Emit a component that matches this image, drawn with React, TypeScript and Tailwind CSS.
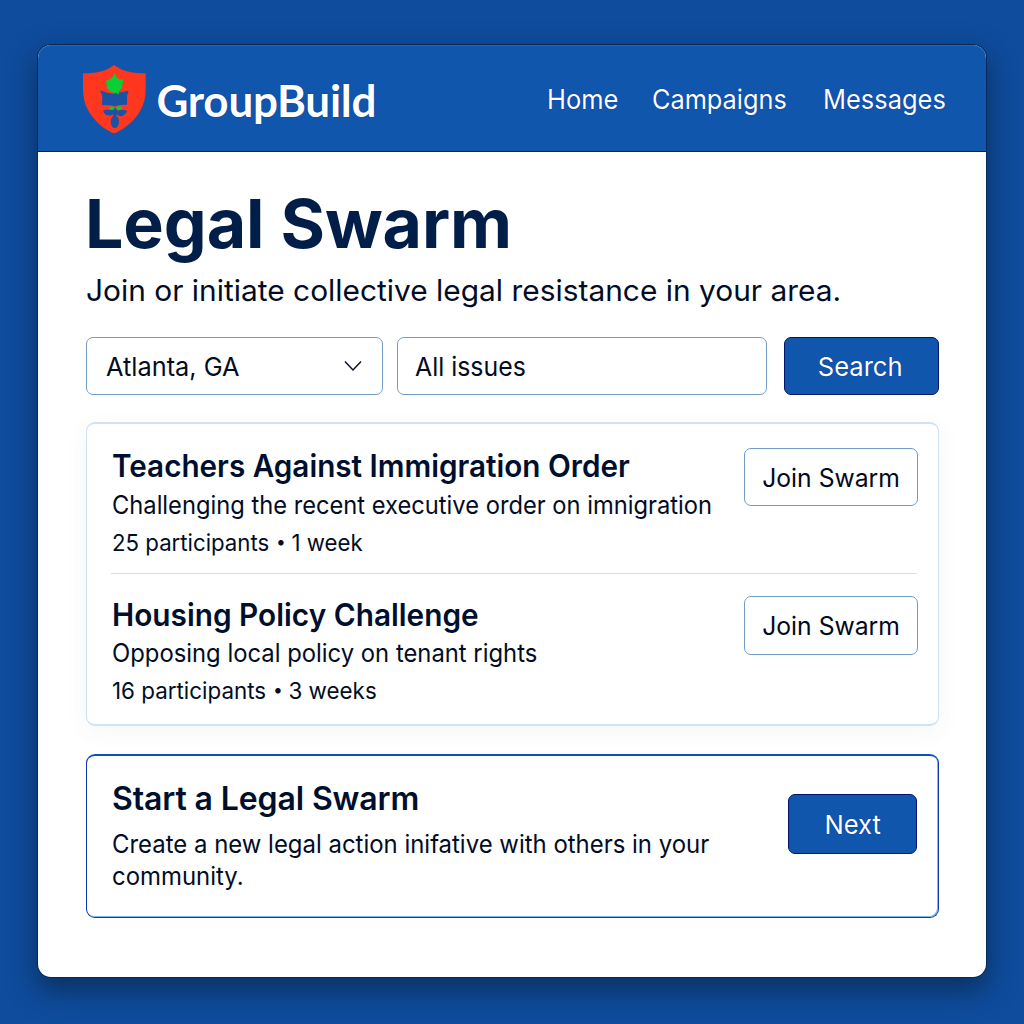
import React from 'react';

function ShieldLogo() {
  return (
    <svg className="mt-px h-[68px] w-[63px] shrink-0" viewBox="39 30 189 204" aria-hidden="true">
      <path
        fill="#ff371f"
        d="M132 30C122 38 111 44 100 47C82 53 62 54 39 55V103C39 126 44 149 56 169C73 197 98 220 126 233Q133 236 141 232C170 217 193 197 210 169C222 149 227 127 227 103V55C204 54 184 53 166 47C154 44 143 38 132 30Z"
      />
      <path
        fill="#1c52a3"
        d="M90 106L112 113L133 116L153 112L176 107L171 124V149L150 150L134 154L118 151L96 150L97 124Z"
      />
      <path
        fill="#1c52a3"
        d="M99 167Q111 161 123 166L130 159H138L143 167Q157 161 172 168Q167 180 153 184Q143 184 141 178L139 183Q147 188 147 200Q147 216 134 220Q122 216 122 200Q122 188 130 183L128 178Q123 184 113 181Q104 179 99 167Z"
      />
      <path fill="#12c53a" d="M116 161Q119 152 130 154L134 163L125 165ZM138 163L142 153Q154 152 157 161L148 166Z" />
      <path
        fill="#07cf35"
        d="M134 53C137 62 141 70 150 74Q158 71 160 77C158 81 159 86 156 90C159 97 153 104 149 106Q145 109 146 113L147 120L141 115L134 113C127 114 118 110 116 105Q109 101 110 93C112 88 107 84 108 79Q110 75 116 75C126 69 131 61 134 53Z"
      />
    </svg>
  );
}

type Swarm = {
  title: string;
  description: string;
  participants: string;
  duration: string;
  titleScale: string;
  descriptionScale: string;
  metaScale: string;
};

const swarms: Swarm[] = [
  {
    title: 'Teachers Against Immigration Order',
    description: 'Challenging the recent executive order on imnigration',
    participants: '25 participants',
    duration: '1 week',
    titleScale: 'scale-x-[0.957]',
    descriptionScale: 'scale-x-[0.948]',
    metaScale: 'scale-x-[0.966]',
  },
  {
    title: 'Housing Policy Challenge',
    description: 'Opposing local policy on tenant rights',
    participants: '16 participants',
    duration: '3 weeks',
    titleScale: 'scale-x-[0.961]',
    descriptionScale: 'scale-x-[0.953]',
    metaScale: 'scale-x-[0.973]',
  },
];

function SwarmText({ swarm, second }: { swarm: Swarm; second?: boolean }) {
  return (
    <div className="w-[620px] whitespace-nowrap">
      <h2 className={`origin-left text-[31px] leading-10 font-semibold text-[#000f2e] ${swarm.titleScale}`}>
        {swarm.title}
      </h2>
      <p className={`origin-left text-[25px] leading-9 ${second ? '' : 'mt-px'} ${swarm.descriptionScale}`}>
        {swarm.description}
      </p>
      <p className={`mt-0.5 flex origin-left items-center text-[23px] leading-9 ${swarm.metaScale}`}>
        {swarm.participants}
        <span className="mx-[7px] -mt-0.5 w-[9px] text-center text-[18px] leading-9">•</span>
        {swarm.duration}
      </p>
    </div>
  );
}

function JoinButton() {
  return (
    <button className="flex h-[58.5px] w-[174px] shrink-0 justify-center rounded-[7px] border border-[#719dc4] bg-white pt-[11px] text-[25.5px] leading-9 whitespace-nowrap text-[#000a20]">
      <span className="scale-x-[0.969]">Join Swarm</span>
    </button>
  );
}

export default function App() {
  return (
    <div className="h-[1024px] w-[1024px] overflow-hidden bg-[#0f4c9d] pt-[45px] pl-[38px] font-['Inter',sans-serif] text-[#020d25]">
      <div className="h-[932px] w-[948px] overflow-hidden rounded-[13px] bg-white shadow-[0_0_0_1px_#04285c,0_12px_28px_2px_rgba(10,42,78,0.75)]">
        <header className="flex h-[107px] items-center rounded-t-[13px] border-b border-b-[#001478] bg-[#1056ad] pl-[45px] text-white shadow-[inset_0_1px_0_#2368b8]">
          <ShieldLogo />
          <span className="mt-[3px] ml-[10.5px] w-[220px] font-['Lato',sans-serif] text-[44px] leading-[56px] font-bold tracking-[-0.26px] [text-shadow:0_0_1px_#001a90]">
            GroupBuild
          </span>
          <nav className="mt-px ml-[170px] flex text-[26.5px] leading-9 whitespace-nowrap [text-shadow:0_0_1px_#001a90]">
            <a className="w-[105px] origin-left scale-x-[0.961]">Home</a>
            <a className="w-[171px] origin-left scale-x-[0.955]">Campaigns</a>
            <a className="origin-left scale-x-[0.96]">Messages</a>
          </nav>
        </header>

        <main className="pt-[35px] pl-12">
          <h1 className="-ml-px text-[68px] leading-[72px] font-bold tracking-[-0.077px] whitespace-nowrap text-[#001e48]">
            Legal Swarm
          </h1>
          <p className="mt-[13px] w-[760px] origin-left scale-x-[1.013] text-[29.5px] leading-9 whitespace-nowrap">
            Join or initiate collective legal resistance in your area.
          </p>

          <form className="mt-[29px] flex h-[58px] w-[853px] text-[26px] leading-9 whitespace-nowrap">
            <div className="flex w-[297px] items-center justify-between rounded-[7px] border border-[#719dc4] pr-5 pl-[19px]">
              <span className="mt-px origin-left scale-x-[0.975]">Atlanta, GA</span>
              <svg className="h-3 w-[18px]" viewBox="0 0 18 12" fill="none" stroke="#020d25" strokeWidth="1.4">
                <path d="M1 1.5L9 10L17 1.5" />
              </svg>
            </div>
            <div className="ml-[14px] flex w-[370px] items-center rounded-[7px] border border-[#719dc4] pl-[17px]">
              <span className="mt-px origin-left scale-x-[0.956]">All issues</span>
            </div>
            <button
              type="button"
              className="ml-[17px] w-[155px] rounded-[7px] border border-[#00156e] bg-[#1056ad] pt-px pr-[3px] text-white [text-shadow:0_0_1px_#001a90]"
            >
              <span className="inline-block scale-x-[0.983]">Search</span>
            </button>
          </form>

          <section className="mt-[27px] h-[304px] w-[853px] rounded-[9px] border border-y-2 border-[#d2e2f3] bg-white pr-5 pl-[25px] shadow-[0_6px_24px_rgba(30,70,120,0.05)]">
            <div className="flex h-[149px] items-start justify-between pt-[22px]">
              <SwarmText swarm={swarms[0]} />
              <div className="mt-[1.5px]">
                <JoinButton />
              </div>
            </div>
            <div className="mr-px -ml-px h-px bg-[#cfdff0]" />
            <div className="flex items-start justify-between pt-[21px]">
              <SwarmText swarm={swarms[1]} second />
              <div className="mt-px">
                <JoinButton />
              </div>
            </div>
          </section>

          <section className="mt-7 flex h-[164px] w-[853px] justify-between rounded-[9px] border border-t-2 border-[#0a37ad] border-t-[#0851c5] bg-white pt-[23px] pr-[21px] pl-[25px] shadow-[inset_-1px_-1px_0_#80baf0]">
            <div className="w-[640px] whitespace-nowrap">
              <h2 className="text-[32px] leading-10 font-semibold tracking-[-0.12px] text-[#000f2e]">
                Start a Legal Swarm
              </h2>
              <p className="mt-2.5 origin-left scale-x-[0.957] text-[25px] leading-[31.5px]">
                Create a new legal action inifative with others in your
                <br />
                community.
              </p>
            </div>
            <button className="mt-[15px] h-[60px] w-[129px] shrink-0 rounded-[7px] border border-[#00156e] bg-[#1056ad] pt-px text-[26px] leading-9 text-white [text-shadow:0_0_1px_#001a90]">
              <span className="inline-block scale-x-[0.984]">Next</span>
            </button>
          </section>
        </main>
      </div>
    </div>
  );
}
